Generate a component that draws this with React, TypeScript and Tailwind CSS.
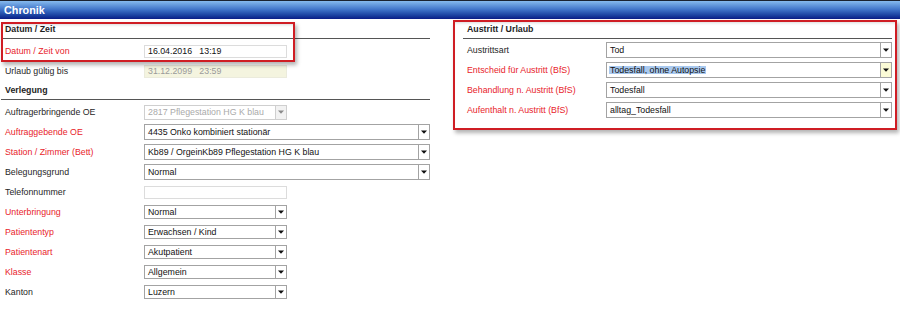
import React from 'react';

type Row = {
  label: string;
  red?: boolean;
  kind: 'select' | 'text' | 'readonly' | 'disabled';
  value?: string;
  wide?: boolean;
  highlight?: boolean;
};

const verlegung: Row[] = [
  { label: 'Auftragerbringende OE', kind: 'disabled', value: '2817 Pflegestation HG K blau' },
  { label: 'Auftraggebende OE', red: true, kind: 'select', value: '4435 Onko kombiniert stationär', wide: true },
  { label: 'Station / Zimmer (Bett)', red: true, kind: 'select', value: 'Kb89 / OrgeinKb89 Pflegestation HG K blau', wide: true },
  { label: 'Belegungsgrund', kind: 'select', value: 'Normal', wide: true },
  { label: 'Telefonnummer', kind: 'text', value: '' },
  { label: 'Unterbringung', red: true, kind: 'select', value: 'Normal' },
  { label: 'Patiententyp', red: true, kind: 'select', value: 'Erwachsen / Kind' },
  { label: 'Patientenart', red: true, kind: 'select', value: 'Akutpatient' },
  { label: 'Klasse', red: true, kind: 'select', value: 'Allgemein' },
  { label: 'Kanton', kind: 'select', value: 'Luzern' },
];

const austritt: Row[] = [
  { label: 'Austrittsart', kind: 'select', value: 'Tod', wide: true },
  { label: 'Entscheid für Austritt (BfS)', red: true, kind: 'select', value: 'Todesfall, ohne Autopsie', wide: true, highlight: true },
  { label: 'Behandlung n. Austritt (BfS)', red: true, kind: 'select', value: 'Todesfall', wide: true },
  { label: 'Aufenthalt n. Austritt (BfS)', red: true, kind: 'select', value: 'alltag_Todesfall', wide: true },
];

// small black combo arrow
const Arrow = ({ muted }: { muted?: boolean }) => (
  <svg width="6" height="4" viewBox="0 0 6 4">
    <path d="M0 0.5h6L3 3.8z" fill={muted ? '#8a8a8a' : '#111'} />
  </svg>
);

const Field = ({ row }: { row: Row }) => {
  if (row.kind === 'text' || row.kind === 'readonly') {
    const ro = row.kind === 'readonly';
    return (
      <div
        className={`flex items-center w-[143px] h-[13px] pl-[3px] border whitespace-pre ${
          ro ? 'bg-[#f4f4df] border-[#ebebdc] text-[#9a9a9a]' : 'bg-white border-[#dcdcdc] text-[#111]'
        }`}
      >
        {row.value}
      </div>
    );
  }
  const disabled = row.kind === 'disabled';
  const w = row.wide ? 'w-[286px]' : 'w-[143px]';
  const h = disabled ? 'h-[15px]' : row.wide ? 'h-[16px]' : 'h-[14px]';
  return (
    <div
      className={`flex ${w} ${h} border ${
        disabled ? 'border-[#cfcfcf] text-[#aaaaaa]' : 'border-[#a3a3a3] text-[#111]'
      } bg-white`}
    >
      <div className="flex-1 flex items-center pl-[3px] overflow-hidden whitespace-nowrap">
        {row.highlight ? <span className="bg-[#a9c9ef] px-[1px] -ml-[1px]">{row.value}</span> : row.value}
      </div>
      <div
        className={`w-[11px] flex items-center justify-center border-l ${
          disabled ? 'border-[#cfcfcf] bg-[#f2f2f2]' : 'border-[#a3a3a3]'
        } ${row.highlight ? 'bg-[#fbfbd6]' : ''}`}
      >
        <Arrow muted={disabled} />
      </div>
    </div>
  );
};

const FormRow = ({ row }: { row: Row }) => (
  <div className="flex items-center h-[20px] pl-[4px]">
    <div className={`w-[139px] ${row.red ? 'text-[#e8232b]' : 'text-[#262626]'}`}>{row.label}</div>
    <Field row={row} />
  </div>
);

const SectionTitle = ({ title, h }: { title: string; h: string }) => (
  <div className={`flex items-center ${h} pl-[4px] font-bold text-[#1e1e1e] border-b border-[#555]`}>{title}</div>
);

export default function App() {
  return (
    <div className="relative w-[900px] h-[317px] bg-white overflow-hidden text-[8.8px] leading-none font-['Liberation_Sans',Arial,sans-serif]">
      {/* title bar */}
      <div className="h-[19px] border-t-[1.5px] border-[#1b2230] bg-linear-to-b from-[#86baee] via-[#3d70c6] to-[#0b1c86] flex items-center pl-[4px]">
        <span className="text-white font-bold text-[10.8px]">Chronik</span>
      </div>

      <div className="flex pt-[2px]">
        {/* left column */}
        <div className="ml-[1px] w-[429px] flex flex-col">
          <SectionTitle title="Datum / Zeit" h="h-[18px]" />
          <div className="pt-[2px]">
            <FormRow row={{ label: 'Datum / Zeit von', red: true, kind: 'text', value: '16.04.2016   13:19' }} />
            <FormRow row={{ label: 'Urlaub gültig bis', kind: 'readonly', value: '31.12.2099   23:59' }} />
          </div>
          <SectionTitle title="Verlegung" h="h-[19px]" />
          <div className="pt-[2px]">
            {verlegung.map((r) => (
              <FormRow key={r.label} row={r} />
            ))}
          </div>
        </div>

        {/* right column */}
        <div className="ml-[33px] w-[429px] flex flex-col">
          <SectionTitle title="Austritt / Urlaub" h="h-[18px]" />
          <div className="pt-[1px]">
            {austritt.map((r) => (
              <FormRow key={r.label} row={r} />
            ))}
          </div>
        </div>
      </div>

      {/* annotation frames */}
      <div className="absolute left-[1px] top-[22px] w-[294px] h-[40px] border-2 border-[#cf1d24] shadow-[2px_3px_4px_rgba(0,0,0,0.3),inset_0_3px_3px_-2px_rgba(0,0,0,0.15)]" />
      <div className="absolute left-[453px] top-[20px] w-[444px] h-[110px] border-2 border-[#cf1d24] shadow-[2px_3px_4px_rgba(0,0,0,0.3),inset_0_3px_3px_-2px_rgba(0,0,0,0.15)]" />
    </div>
  );
}
